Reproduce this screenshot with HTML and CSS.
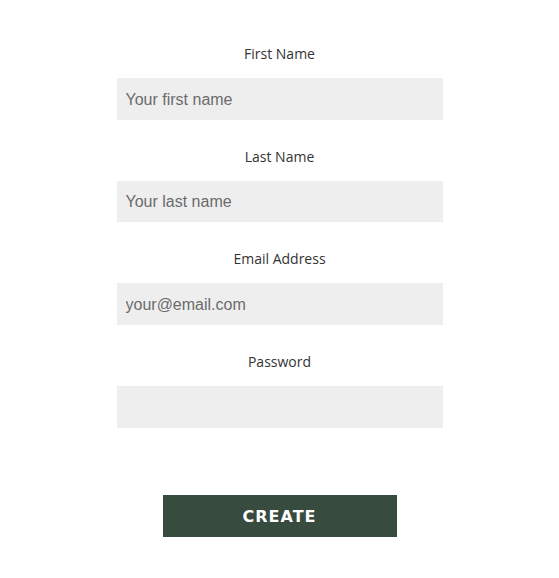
FILE: index.html
```html
<!DOCTYPE html>
<html>
<head>
<meta charset="utf-8">
<link rel="stylesheet" href="styles.css">
</head>
<body>
<form class="signup">
  <div class="field">
    <label class="label" for="fn">First Name</label>
    <input class="input" id="fn" type="text" placeholder="Your first name">
  </div>
  <div class="field">
    <label class="label" for="ln">Last Name</label>
    <input class="input" id="ln" type="text" placeholder="Your last name">
  </div>
  <div class="field">
    <label class="label" for="em">Email Address</label>
    <input class="input" id="em" type="email" placeholder="your@email.com">
  </div>
  <div class="field">
    <label class="label" for="pw">Password</label>
    <input class="input" id="pw" type="password">
  </div>
  <button class="create" type="button">CREATE</button>
</form>
</body>
</html>
```
FILE: styles.css
```css
html, body {
  margin: 0;
  padding: 0;
  background: #ffffff;
}
.signup {
  width: 326px;
  margin: 0 auto;
  padding-top: 43px;
  display: flex;
  flex-direction: column;
  align-items: center;
}
.field {
  width: 100%;
  display: flex;
  flex-direction: column;
  align-items: stretch;
  margin-bottom: 26px;
}
.label {
  display: block;
  text-align: center;
  font-family: "Open Sans", sans-serif;
  font-size: 14px;
  line-height: 20px;
  padding-top: 1px;
  color: #333333;
  margin-bottom: 14px;
}
.input {
  box-sizing: border-box;
  width: 100%;
  height: 41.67px;
  margin: 0;
  border: none;
  outline: none;
  background: #eeeeee;
  padding: 2px 9px 0;
  font-family: "Liberation Sans", Arial, sans-serif;
  font-size: 16px;
  color: #333333;
}
.input::placeholder {
  color: #6b6b6b;
  opacity: 1;
}
.create {
  margin-top: 41px;
  width: 234px;
  height: 42px;
  border: none;
  background: #374b3e;
  color: #ffffff;
  font-family: "DejaVu Sans", Verdana, sans-serif;
  font-weight: bold;
  font-size: 16px;
  letter-spacing: 1px;
  padding: 2px 0 0;
  cursor: pointer;
}
```
